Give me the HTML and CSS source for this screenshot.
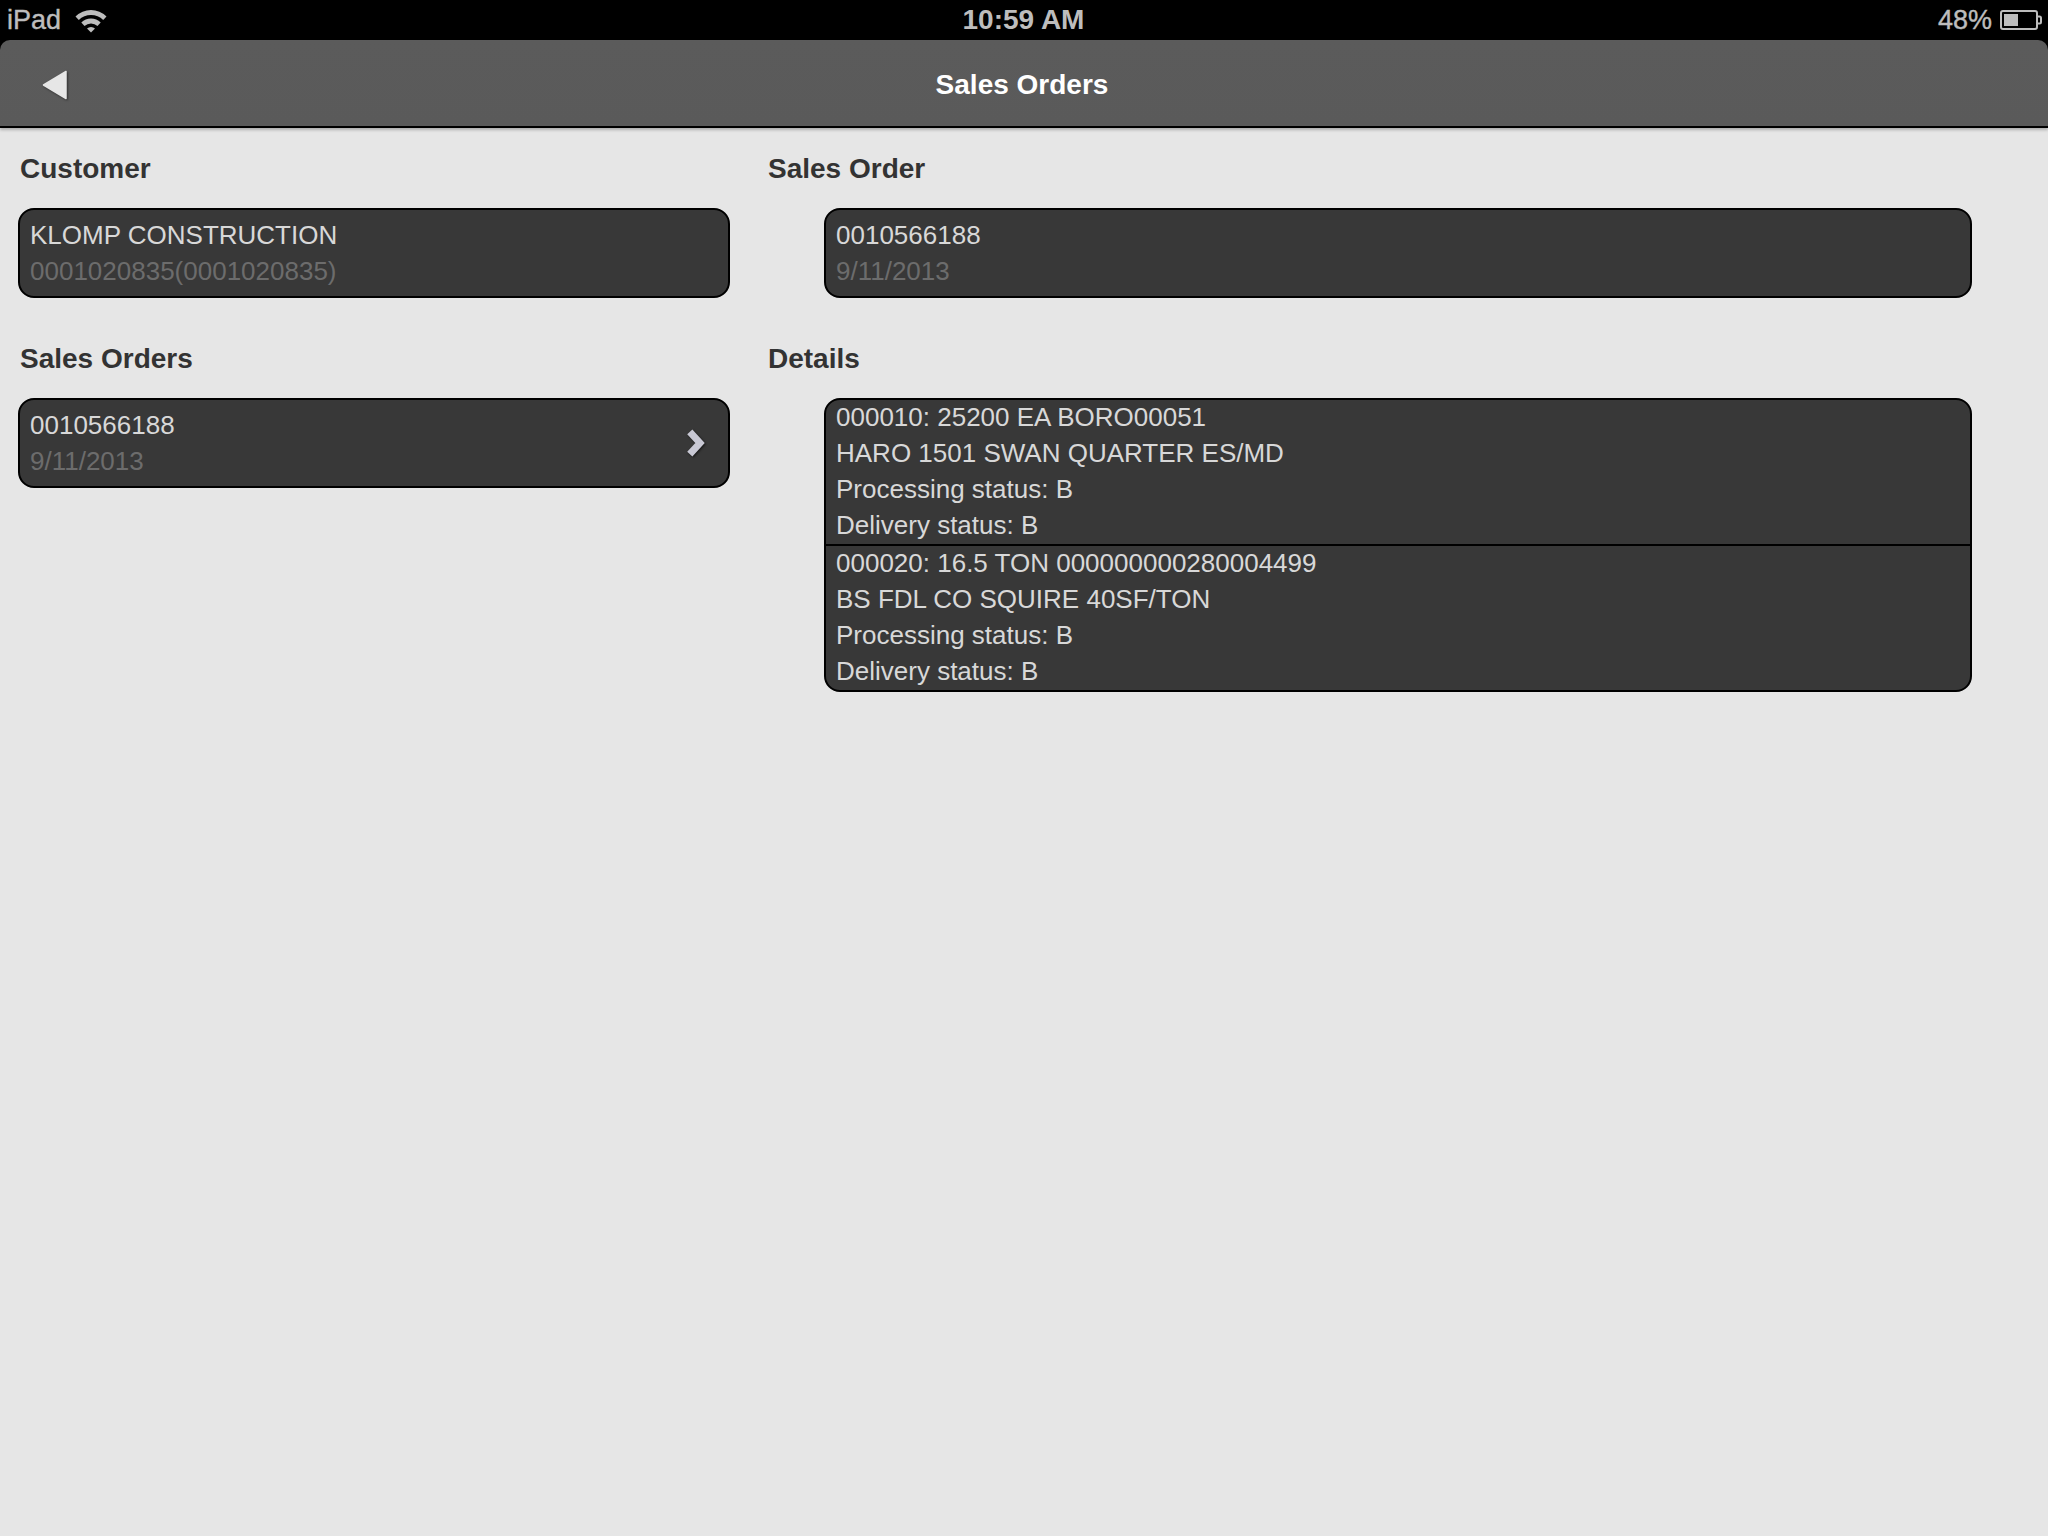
FILE: index.html
```html
<!DOCTYPE html>
<html lang="en">
<head>
<meta charset="utf-8">
<title>Sales Orders</title>
<link rel="stylesheet" href="styles.css">
</head>
<body>
<div class="status">
  <div class="status-left">
    <span class="status-text">iPad</span>
    <svg class="wifi" width="34" height="26" viewBox="0 0 34 26">
      <path d="M1.5 9.5 A22 22 0 0 1 32.5 9.5 L29.2 13 A17.4 17.4 0 0 0 4.8 13 Z" />
      <path d="M7.3 15.6 A13.8 13.8 0 0 1 26.7 15.6 L23.5 19 A9.4 9.4 0 0 0 10.5 19 Z" />
      <path d="M13 21.6 A5.6 5.6 0 0 1 21 21.6 L17 25.6 Z" />
    </svg>
  </div>
  <div class="status-time">10:59 AM</div>
  <div class="status-right">
    <span class="status-text">48%</span>
    <svg class="battery" width="42" height="20" viewBox="0 0 42 20">
      <rect x="1" y="1" width="36" height="18" rx="2" class="battery-case"/>
      <rect x="4" y="4" width="14" height="12" class="battery-fill"/>
      <path d="M38 6.5 H39.5 Q41 6.5 41 8 V12 Q41 13.5 39.5 13.5 H38" class="battery-case"/>
    </svg>
  </div>
</div>
<header class="topbar">
  <div class="topbar-left">
    <svg class="back" width="26" height="30" viewBox="0 0 26 30">
      <path d="M24 1.5 V28.5 L1.5 15 Z" />
    </svg>
  </div>
  <h1 class="title">Sales Orders</h1>
  <div></div>
</header>
<main class="content">
  <section class="col col-left">
    <h2 class="label">Customer</h2>
    <div class="card">
      <div class="row">
        <div class="line">KLOMP CONSTRUCTION</div>
        <div class="line muted">0001020835(0001020835)</div>
      </div>
    </div>
    <h2 class="label">Sales Orders</h2>
    <div class="card">
      <div class="row row-link">
        <div>
          <div class="line">0010566188</div>
          <div class="line muted">9/11/2013</div>
        </div>
        <svg class="chevron" width="18" height="28" viewBox="0 0 18 28">
          <path d="M2.8 2.8 L13 14 L2.8 25.2" />
        </svg>
      </div>
    </div>
  </section>
  <section class="col col-right">
    <h2 class="label">Sales Order</h2>
    <div class="card">
      <div class="row">
        <div class="line">0010566188</div>
        <div class="line muted">9/11/2013</div>
      </div>
    </div>
    <h2 class="label">Details</h2>
    <div class="card">
      <div class="detail">
        <div class="line">000010: 25200 EA BORO00051</div>
        <div class="line">HARO 1501 SWAN QUARTER ES/MD</div>
        <div class="line">Processing status: B</div>
        <div class="line">Delivery status: B</div>
      </div>
      <div class="detail">
        <div class="line">000020: 16.5 TON 000000000280004499</div>
        <div class="line">BS FDL CO SQUIRE 40SF/TON</div>
        <div class="line">Processing status: B</div>
        <div class="line">Delivery status: B</div>
      </div>
    </div>
  </section>
</main>
</body>
</html>
```
FILE: styles.css
```css
* { box-sizing: border-box; }
html, body { margin: 0; height: 100%; }
body {
  width: 2048px;
  height: 1536px;
  overflow: hidden;
  background: #000;
  font-family: "Liberation Sans", Arial, sans-serif;
  display: flex;
  flex-direction: column;
}
.status {
  height: 40px;
  flex: none;
  display: grid;
  grid-template-columns: 1fr auto 1fr;
  align-items: center;
  padding: 0 6px 0 7px;
  background: #000;
  color: #bdbdbd;
  font-size: 27px;
}
.status-text { -webkit-text-stroke: 0.4px #bdbdbd; }
.status-left { display: flex; align-items: center; gap: 13px; }
.status-time { font-weight: bold; font-size: 28px; margin-right: 2px; }
.status-right { display: flex; align-items: center; justify-content: flex-end; gap: 8px; }
.wifi { fill: #bdbdbd; }
.battery-case { fill: none; stroke: #bdbdbd; stroke-width: 2; }
.battery-fill { fill: #bdbdbd; }
.topbar {
  height: 88px;
  flex: none;
  display: grid;
  grid-template-columns: 1fr auto 1fr;
  align-items: center;
  padding: 3px 46px 0 42px;
  background: linear-gradient(#5b5b5b, #5a5a5a);
  border-bottom: 2px solid #000;
  border-radius: 10px 10px 0 0;
  box-shadow: 0 2px 3px rgba(0, 0, 0, 0.25);
  position: relative;
}
.topbar-left { display: flex; align-items: center; }
.back { fill: #e6e6e6; stroke: #e6e6e6; stroke-width: 1.5; stroke-linejoin: round; filter: drop-shadow(1px 1px 1px rgba(0, 0, 0, 0.5)); }
.title { margin: 0; color: #fff; font-size: 28px; font-weight: bold; }
.content {
  flex: 1;
  background: #e6e6e6;
  display: flex;
  padding-top: 24px;
}
.col { display: flex; flex-direction: column; }
.col-left { width: 768px; padding: 0 38px 0 18px; }
.col-right { flex: 1; }
.label {
  margin: 0 0 24px;
  height: 32px;
  line-height: 34px;
  font-size: 28px;
  font-weight: bold;
  color: #333;
}
.col-left .label { padding-left: 2px; }
.card {
  background: #383838;
  border: 2px solid #000;
  border-radius: 16px;
  margin-bottom: 44px;
  overflow: hidden;
  color: #d8d8d8;
  font-size: 26px;
}
.col-right .card { margin-left: 56px; margin-right: 76px; }
.row { padding: 7px 10px; }
.row-link { display: flex; align-items: center; justify-content: space-between; padding-right: 23px; }
.line { height: 36px; line-height: 36px; white-space: nowrap; }
.muted { color: #6c6c6c; }
.detail { padding: 0 10px; }
.detail .line { position: relative; top: -1px; }
.detail + .detail { border-top: 2px solid #000; }
.chevron {
  fill: none;
  stroke: #c8c8d4;
  stroke-width: 7;
  filter: drop-shadow(1px 1px 1px rgba(0, 0, 0, 0.6));
}
```
